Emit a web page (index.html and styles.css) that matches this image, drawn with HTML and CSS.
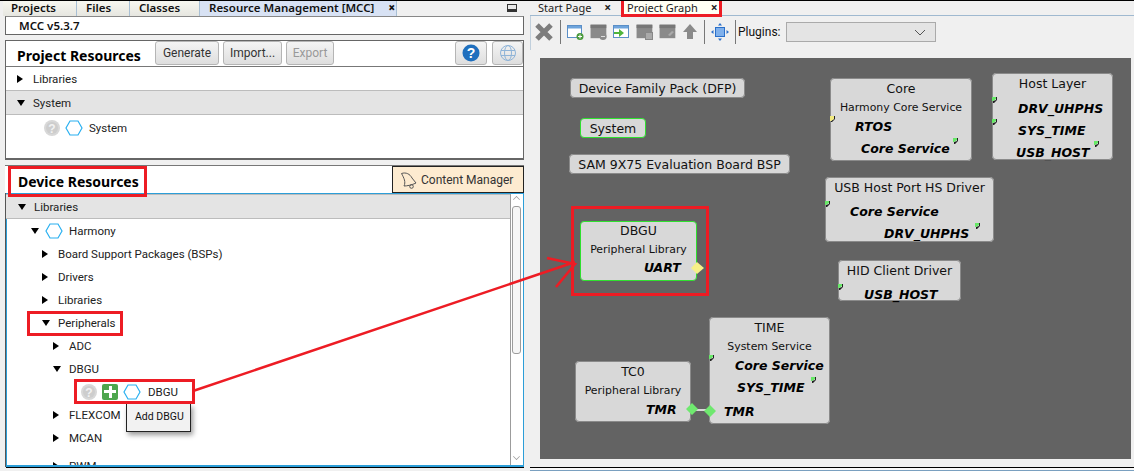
FILE: index.html
```html
<!DOCTYPE html>
<html lang="en">
<head>
    <meta charset="UTF-8">
    <title>MCC Project Graph</title>
    <link rel="stylesheet" href="styles.css">
</head>
<body>
    <svg width="0" height="0" class="defs">
        <symbol id="hex" viewBox="0 0 18 16"><path d="M5 1h8l4 7-4 7H5L1 8z" fill="#fff" stroke="#2ab0f0" stroke-width="1.2"/></symbol>
        <symbol id="help" viewBox="0 0 16 16"><circle cx="8" cy="8" r="8" fill="#d8d8d8"/><circle cx="8" cy="8" r="6" fill="#cdcdcd"/><text x="8" y="12.500" text-anchor="middle" font-size="12" font-weight="700" fill="#f2f2f2" font-family="Liberation Sans">?</text></symbol>
        <symbol id="win" viewBox="0 0 16 16"><rect x="0.5" y="1.5" width="14" height="12" fill="#8a8a8a"/><rect x="0.5" y="1.5" width="14" height="3" fill="#777"/></symbol>
    </svg>

    <div class="app">
        <!-- left side -->
        <div class="left">
            <div class="tabs">
                <span class="tab tab-projects">Projects</span>
                <span class="tab tab-files">Files</span>
                <span class="tab tab-classes">Classes</span>
                <span class="tab tab-active">Resource Management [MCC] <b class="close">×</b></span>
                <span class="minimize"></span>
            </div>

            <div class="version">MCC v5.3.7</div>

            <div class="project">
                <div class="project-head">
                    <h2>Project Resources</h2>
                    <button class="btn btn-gen">Generate</button>
                    <button class="btn btn-imp">Import...</button>
                    <button class="btn btn-exp" disabled>Export</button>
                    <span class="spacer"></span>
                    <button class="btn btn-icon btn-help">
                        <svg width="18" height="18" viewBox="0 0 18 18"><circle cx="9" cy="9" r="8.5" fill="#1f6fbe"/><text x="9" y="14" text-anchor="middle" font-size="14" font-weight="700" fill="#fff" font-family="Liberation Sans">?</text></svg>
                    </button>
                    <button class="btn btn-icon">
                        <svg width="18" height="18" viewBox="0 0 18 18" fill="none" stroke="#8fb4d8"><circle cx="9" cy="9" r="7.5"/><ellipse cx="9" cy="9" rx="3.5" ry="7.5"/><path d="M2 6.5h14M2 11.5h14"/></svg>
                    </button>
                </div>
                <div class="project-tree">
                    <div class="row"><i class="arrow-r"></i>Libraries</div>
                    <div class="row row-sel"><i class="arrow-d"></i>System</div>
                    <div class="row row-leaf">
                        <svg class="ico" width="16" height="16"><use href="#help"/></svg>
                        <svg class="ico" width="18" height="16"><use href="#hex"/></svg>
                        <span class="leaf-name">System</span>
                    </div>
                </div>
            </div>

            <div class="device">
                <div class="device-head">
                    <h2>Device Resources</h2>
                    <div class="content-mgr">
                        <svg width="18" height="18" viewBox="0 0 18 18" fill="none" stroke="#555"><path d="M1.500 2.500C6 1 10 3 12 7l4 5c-4 2-9 3-12 3 2-4 0-8-2.500-12.500z"/><circle cx="11.500" cy="15.500" r="1.800"/></svg>
                        Content Manager
                    </div>
                </div>
                <div class="device-body">
                    <div class="device-tree">
                        <div class="row row-sel row-dev"><i class="arrow-d"></i>Libraries</div>
                        <div class="row lv1"><i class="arrow-d"></i><svg class="ico hex-gap" width="18" height="16"><use href="#hex"/></svg>Harmony</div>
                        <div class="row lv2"><i class="arrow-r"></i>Board Support Packages (BSPs)</div>
                        <div class="row lv2"><i class="arrow-r"></i>Drivers</div>
                        <div class="row lv2"><i class="arrow-r"></i>Libraries</div>
                        <div class="row lv2"><i class="arrow-d"></i>Peripherals</div>
                        <div class="row lv3"><i class="arrow-r"></i>ADC</div>
                        <div class="row lv3"><i class="arrow-d"></i>DBGU</div>
                        <div class="row lv4">
                            <svg class="ico" width="16" height="16"><use href="#help"/></svg>
                            <span class="plus"></span>
                            <svg class="ico" width="18" height="16"><use href="#hex"/></svg>
                            <span>DBGU</span>
                        </div>
                        <div class="row lv3"><i class="arrow-r"></i>FLEXCOM</div>
                        <div class="row lv3"><i class="arrow-r"></i>MCAN</div>
                        <div class="row lv3 row-cut"><i class="arrow-r"></i>PWM</div>
                        <div class="tooltip">Add DBGU</div>
                    </div>
                    <div class="scrollbar">
                        <span class="sb-up"></span>
                        <span class="sb-thumb"></span>
                        <span class="sb-down"></span>
                    </div>
                </div>
            </div>
        </div>

        <!-- right side -->
        <div class="right">
            <div class="tabs tabs-right">
                <span class="rtab rtab-start">Start Page <b class="close">×</b></span>
                <span class="rtab rtab-graph">Project Graph <b class="close">×</b></span>
            </div>

            <div class="toolbar">
                <svg width="20" height="20" viewBox="0 0 20 20"><path d="M3 3l14 14M17 3L3 17" stroke="#7d7d7d" stroke-width="5"/></svg>
                <span class="sep"></span>
                <svg width="18" height="18" viewBox="0 0 18 18"><rect x="0.5" y="2.5" width="14" height="12" fill="#fff" stroke="#5b8fc7"/><rect x="1" y="3" width="13" height="2.5" fill="#6ea4dc"/><circle cx="13" cy="13.5" r="3.5" fill="#4a9a3c"/><path d="M11 13.5h4M13 11.5v4" stroke="#fff"/></svg>
                <svg width="18" height="18" viewBox="0 0 18 18"><use href="#win"/><circle cx="13" cy="13.5" r="3.5" fill="#8a8a8a"/><path d="M11 13.5h4" stroke="#ddd"/></svg>
                <svg width="18" height="18" viewBox="0 0 18 18"><rect x="0.5" y="2.5" width="15" height="12" fill="#fff" stroke="#5b8fc7"/><rect x="1" y="3" width="14" height="2.5" fill="#6ea4dc"/><path d="M1 9h5V6l5 4-5 4v-3H1z" fill="#4fb43c"/></svg>
                <svg width="18" height="18" viewBox="0 0 18 18"><use href="#win"/><rect x="9.5" y="9.5" width="7" height="7" fill="#aaa" stroke="#888"/></svg>
                <svg width="18" height="18" viewBox="0 0 18 18"><use href="#win"/><path d="M9 12l4-4 2 1-4 4z" fill="#aaa"/></svg>
                <svg width="16" height="18" viewBox="0 0 16 18"><path d="M8 1l7 8h-4v7H5V9H1z" fill="#8a8a8a"/></svg>
                <span class="sep"></span>
                <svg width="18" height="18" viewBox="0 0 18 18" fill="#2a6fc9"><rect x="4.5" y="4.5" width="9" height="9" fill="#7fb0ec" stroke="#2a6fc9"/><path d="M9 0l2 2.500H7zM9 18l2-2.500H7zM0 9l2.500-2v4zM18 9l-2.500-2v4z"/></svg>
                <span class="sep sep-last"></span>
                <span class="plugins">Plugins:</span>
                <div class="select"><svg width="12" height="7" viewBox="0 0 12 7" fill="none" stroke="#555"><path d="M1 1l5 5 5-5"/></svg></div>
            </div>

            <div class="canvas">
                <div class="node node-dfp">Device Family Pack (DFP)</div>
                <div class="node node-sys on">System</div>
                <div class="node node-sam">SAM 9X75 Evaluation Board BSP</div>

                <div class="node node-dbgu on">
                    <div class="n-title">DBGU</div>
                    <div class="n-sub">Peripheral Library</div>
                    <div class="n-port p-dbgu">UART</div>
                </div>

                <div class="node node-core">
                    <div class="n-title">Core</div>
                    <div class="n-sub">Harmony Core Service</div>
                    <div class="n-port p-core1">RTOS</div>
                    <div class="n-port p-core2">Core Service</div>
                </div>

                <div class="node node-host">
                    <div class="n-title">Host Layer</div>
                    <div class="n-port p-host1">DRV_UHPHS</div>
                    <div class="n-port p-host2">SYS_TIME</div>
                    <div class="n-port p-host3">USB_HOST</div>
                </div>

                <div class="node node-usb">
                    <div class="n-title">USB Host Port HS Driver</div>
                    <div class="n-port p-usb1">Core Service</div>
                    <div class="n-port p-usb2">DRV_UHPHS</div>
                </div>

                <div class="node node-hid">
                    <div class="n-title">HID Client Driver</div>
                    <div class="n-port p-hid">USB_HOST</div>
                </div>

                <div class="node node-tc0">
                    <div class="n-title">TC0</div>
                    <div class="n-sub">Peripheral Library</div>
                    <div class="n-port p-tc0">TMR</div>
                </div>

                <div class="node node-time">
                    <div class="n-title">TIME</div>
                    <div class="n-sub">System Service</div>
                    <div class="n-port p-time1">Core Service</div>
                    <div class="n-port p-time2">SYS_TIME</div>
                    <div class="n-port p-time3">TMR</div>
                </div>

                <!-- ports and the connection, in canvas coordinates -->
                <svg class="wires" width="591" height="401" viewBox="540 58 591 401">
                    <path d="M692 410h18" stroke="#fff" stroke-width="1.500"/>
                    <path d="M692 403l6 6-6 6-6-6zM710 405l6 6-6 6-6-6z" fill="#6fe86f"/>
                    <path d="M697 262l7 6-7 6-6-6z" fill="#f8f088"/>
                    <g fill="#222"><path d="M835 116v3l-3 3h-1v-1l3-2v-3z"/></g>
                    <g fill="#f2ea80"><path d="M830 116h4v3l-3 2h-1z"/></g>
                    <g fill="#222">
                        <path d="M958 138v3l-3 3h-1v-2l3-1v-3zM997 97v3l-3 3h-1v-2l3-1v-3zM997 119v3l-3 3h-1v-2l3-1v-3zM1099 141v3l-3 3h-1v-2l3-1v-3z"/>
                        <path d="M830 201v3l-3 3h-1v-2l3-1v-3zM980 223v3l-3 3h-1v-2l3-1v-3zM843 284v3l-3 3h-1v-2l3-1v-3zM714 355v3l-3 3h-1v-2l3-1v-3zM816 377v3l-3 3h-1v-2l3-1v-3z"/>
                    </g>
                    <g fill="#66e866">
                        <path d="M953 138h4v2l-3 2h-1zM992 97h4v2l-3 2h-1zM992 119h4v2l-3 2h-1zM1094 141h4v2l-3 2h-1z"/>
                        <path d="M825 201h4v2l-3 2h-1zM975 223h4v2l-3 2h-1zM838 284h4v2l-3 2h-1zM709 355h4v2l-3 2h-1zM811 377h4v2l-3 2h-1z"/>
                    </g>
                </svg>
            </div>
            <div class="bottom"></div>
        </div>

        <!-- annotations drawn over the screenshot -->
        <span class="mark mark-device"></span>
        <span class="mark mark-periph"></span>
        <span class="mark mark-leaf"></span>
        <span class="mark mark-graph"></span>
        <span class="mark mark-dbgu"></span>
        <svg class="arrow" width="1134" height="471" viewBox="0 0 1134 471" fill="none" stroke="#ed1c24" stroke-width="2.500">
            <path d="M193 391L575 262M547 258l28 6-19 23"/>
        </svg>
    </div>
</body>
</html>
```
FILE: styles.css
```css
/* page */
* {
    box-sizing: border-box;
}

body {
    margin: 0;
    background: #f0f0f0;
    font-family: Roboto, "Noto Sans", sans-serif;
    font-size: 11.500px;
    color: #111;
}

.defs {
    position: absolute;
}

.app {
    position: relative;
    display: flex;
    width: 1134px;
    height: 471px;
    overflow: hidden;
    border-top: 1px solid #000;
}

h2 {
    margin: 0;
    font-family: "Noto Sans", sans-serif;
    font-size: 14px;
    font-weight: 700;
    color: #000;
}

/* left side */
.left {
    width: 530px;
    height: 470px;
    flex: none;
    display: flex;
    flex-direction: column;
    background: #f0f0f0;
}

.tabs {
    display: flex;
    height: 15px;
    flex: none;
    padding-left: 3px;
}

.tab {
    padding-left: 9px;
    line-height: 14px;
    font-family: "Noto Sans", sans-serif;
    font-weight: 600;
    font-size: 11.5px;
    background: linear-gradient(#f7f7f0, #e6e6e0);
    border-right: 1px solid #a8bfd4;
}

.tab-projects {
    width: 74px;
    padding-left: 8px;
}

.tab-files {
    width: 53px;
}

.tab-classes {
    width: 70px;
}

.tab-active {
    width: 197px;
    background: #d8e2f4;
    line-height: 13px;
}

.close {
    margin-left: 11px;
    font-size: 12px;
    line-height: 12px;
}

.minimize {
    width: 10px;
    height: 8px;
    margin: 3px 0 0 110px;
    border: 1px solid #333;
    border-bottom-width: 3px;
    background: #e8e8e8;
}

.version {
    height: 19px;
    flex: none;
    margin-left: 5px;
    width: 519px;
    padding-left: 13px;
    line-height: 17px;
    font-family: "Noto Sans", sans-serif;
    font-weight: 600;
    font-size: 11.5px;
    background: #fff;
    border: 1px solid #666;
    border-top-color: #888;
}

.project {
    margin: 5px 0 0 5px;
    width: 519px;
    height: 120px;
    flex: none;
    background: #fff;
    border: 1px solid #666;
    border-bottom-width: 2px;
}

.project-head {
    display: flex;
    align-items: flex-start;
    height: 26px;
    padding: 0 0 0 11px;
    border-bottom: 1px solid #777;
}

.project-head h2 {
    width: 138px;
    margin-top: 5px;
    line-height: 20px;
}

.btn {
    height: 24px;
    margin: 0 4px 0 0;
    padding: 0;
    font-family: inherit;
    font-size: 12px;
    color: #333;
    background: linear-gradient(#f4f4f4, #dedede);
    border: 1px solid #b5b5b5;
    border-radius: 3px;
}

.btn-gen {
    width: 64px;
}

.btn-imp {
    width: 59px;
}

.btn-exp {
    width: 48px;
    color: #999;
}

.spacer {
    flex: 1;
}

.btn-icon {
    width: 31px;
    margin-right: 0;
    display: flex;
    align-items: center;
    justify-content: center;
}

.btn-help {
    width: 32px;
    margin-right: 5px;
}

/* tree rows */
.row {
    display: flex;
    align-items: center;
    height: 23px;
    padding-left: 11px;
    white-space: nowrap;
    color: #222;
}

.row-sel {
    background: #e4e4e4;
    border-top: 1px solid #bcbcbc;
    border-bottom: 1px solid #bcbcbc;
    height: 25px;
}

.row-leaf {
    padding-left: 38px;
    height: 25px;
}

.arrow-r {
    width: 0;
    height: 0;
    flex: none;
    margin-right: 10px;
    border-left: 6px solid #000;
    border-top: 4px solid transparent;
    border-bottom: 4px solid transparent;
}

.arrow-d {
    width: 0;
    height: 0;
    flex: none;
    margin-right: 8px;
    border-top: 6px solid #000;
    border-left: 4px solid transparent;
    border-right: 4px solid transparent;
}

.ico {
    flex: none;
    margin-right: 5px;
}

.hex-gap {
    margin: 0 6px 0 -2px;
}

.leaf-name {
    margin-left: 1px;
}

/* device resources */
.device {
    margin: 5px 0 0 5px;
    width: 519px;
    flex: 1;
    min-height: 0;
    display: flex;
    flex-direction: column;
    background: #f0f0f0;
}

.device-head {
    display: flex;
    justify-content: space-between;
    height: 28px;
    flex: none;
    padding-left: 13px;
    background: #fff;
    border-top: 1px solid #777;
}

.device-head h2 {
    margin-top: 6px;
    line-height: 20px;
}

.content-mgr {
    display: flex;
    align-items: center;
    gap: 3px;
    width: 132px;
    padding-left: 7px;
    font-size: 12px;
    color: #333;
    background: #fdebd0;
    border: 1px solid #222;
}

.device-body {
    flex: 1;
    display: flex;
    min-height: 0;
    margin: 0 0 4px 1px;
    background: #fff;
    border: 1px solid #2c9ed8;
    border-bottom-width: 2px;
    box-shadow: -1px 0 0 #555, 0 1px 0 #000;
}

.device-tree {
    position: relative;
    flex: 1;
    min-width: 0;
    margin-left: -1px;
    overflow: hidden;
}

.row-dev {
    padding-left: 12px;
}

.lv1 {
    padding-left: 25px;
}

.lv2 {
    padding-left: 36px;
    height: 23px;
}

.lv3 {
    padding-left: 47px;
}

.lv4 {
    padding-left: 75px;
}

.lv4 .plus + .ico {
    margin-right: 7px;
}

.row-cut {
    margin-top: 5px;
}

.plus {
    width: 16px;
    height: 16px;
    flex: none;
    margin-right: 5px;
    background: linear-gradient(#fff, #fff) center / 12px 3px no-repeat,
        linear-gradient(#fff, #fff) center / 3px 12px no-repeat,
        #4ea64e;
    border-radius: 2px;
}

.tooltip {
    position: absolute;
    left: 120px;
    top: 210px;
    width: 65px;
    height: 28px;
    padding-left: 8px;
    line-height: 25px;
    font-size: 10.500px;
    background: #f2f2f2;
    border: 1px solid #222;
    border-top: none;
    box-shadow: 2px 3px 5px rgba(0, 0, 0, 0.4);
}

.scrollbar {
    display: flex;
    flex-direction: column;
    align-items: flex-start;
    width: 13px;
    flex: none;
    padding: 2px 0 0 1px;
    background: #fff;
    border-left: 1px solid #9c9c9c;
}

.sb-up,
.sb-down {
    width: 7px;
    height: 7px;
    margin-left: 1px;
    border-left: 1px solid #999;
    border-top: 1px solid #999;
    transform: rotate(45deg) scale(0.7);
}

.sb-down {
    margin-top: auto;
    margin-bottom: 5px;
    transform: rotate(225deg) scale(0.7);
}

.sb-thumb {
    width: 9px;
    height: 148px;
    margin-top: 3px;
    background: #f6f6f6;
    border: 1px solid #9c9c9c;
    border-radius: 3px;
}

/* right side */
.right {
    position: relative;
    flex: 1;
    height: 470px;
    display: flex;
    flex-direction: column;
    min-width: 0;
}

.tabs-right {
    padding-left: 1px;
    border-bottom: 1px solid #9fb9d0;
}

.rtab {
    display: block;
    line-height: 13px;
    font-family: "Noto Sans", sans-serif;
    font-size: 11px;
    color: #222;
}

.rtab-start {
    width: 92px;
    padding-left: 7px;
}

.rtab-graph {
    width: 98px;
    padding-left: 4px;
    background: #fffff4;
}

.rtab .close {
    margin-left: 10px;
}

.toolbar {
    display: flex;
    align-items: center;
    gap: 5px;
    height: 34px;
    flex: none;
    padding: 0 0 2px 3px;
    border-left: 1px solid #c0cfdc;
}

.sep {
    width: 1px;
    height: 24px;
    margin: 0 1px;
    background: #777;
}

.sep-last {
    margin-right: -3px;
}

.plugins {
    margin-right: 0;
    font-size: 12px;
}

.select {
    display: flex;
    align-items: center;
    justify-content: flex-end;
    width: 150px;
    height: 20px;
    padding-right: 9px;
    background: #e4e4e4;
    border: 1px solid #aaa;
}

.canvas {
    position: relative;
    width: 591px;
    height: 401px;
    margin: 8px 0 0 10px;
    flex: none;
    background: #636363;
    font-family: "DejaVu Sans", sans-serif;
}

.bottom {
    height: 11px;
    margin-top: auto;
    border-bottom: 1px solid #7aa0c0;
    box-shadow: inset 0 -2px 0 #f8f8f8, inset 0 -3px 0 #000;
}

/* graph nodes */
.node {
    position: absolute;
    padding-top: 1px;
    background: #d8d8d8;
    border: 1.5px solid #c8c8c8;
    border-radius: 4px;
    color: #111;
    font-size: 12.500px;
    line-height: 17px;
    text-align: center;
    white-space: nowrap;
    outline: 1px solid #8a8a8a;
    outline-offset: -1px;
}

.node.on {
    border-color: #2fe02f;
    outline: none;
}

.node-dfp {
    left: 30px;
    top: 20px;
    width: 175px;
    height: 20px;
}

.node-sys {
    left: 40px;
    top: 60px;
    width: 66px;
    height: 20px;
}

.node-sam {
    left: 29px;
    top: 96px;
    width: 221px;
    height: 20px;
}

.node-dbgu {
    left: 40px;
    top: 163px;
    width: 117px;
    height: 60px;
}

.node-core {
    left: 290px;
    top: 20px;
    width: 142px;
    height: 83px;
}

.node-host {
    left: 452px;
    top: 15px;
    width: 121px;
    height: 87px;
}

.node-usb {
    left: 285px;
    top: 119px;
    width: 169px;
    height: 65px;
}

.node-hid {
    left: 298px;
    top: 202px;
    width: 123px;
    height: 41px;
}

.node-tc0 {
    left: 35px;
    top: 303px;
    width: 116px;
    height: 61px;
}

.node-time {
    left: 169px;
    top: 259px;
    width: 121px;
    height: 107px;
}

.n-title {
    line-height: 17px;
}

.n-sub {
    margin-top: 3px;
    font-size: 10.900px;
    line-height: 16px;
}

.n-port {
    margin-top: 5px;
    font-weight: 700;
    font-style: italic;
    font-size: 12.500px;
    line-height: 17px;
    text-align: left;
    color: #000;
}

.node-dbgu .n-title {
    margin-top: -1px;
}

.p-dbgu {
    padding-left: 63px;
    margin-top: 1px;
}

.p-core1 {
    padding-left: 24px;
    margin-top: 2px;
}

.p-core2 {
    padding-left: 30px;
}

.p-host1 {
    padding-left: 25px;
    margin-top: 8px;
}

.p-host2 {
    padding-left: 25px;
}

.p-host3 {
    padding-left: 23px;
}

.p-usb1 {
    padding-left: 24px;
    margin-top: 7px;
}

.p-usb2 {
    padding-left: 58px;
}

.p-hid {
    padding-left: 25px;
    margin-top: 7px;
}

.p-tc0 {
    padding-left: 70px;
    margin-top: 2px;
}

.p-time1 {
    padding-left: 25px;
    margin-top: 2px;
}

.p-time2 {
    padding-left: 27px;
}

.p-time3 {
    padding-left: 14px;
    margin-top: 7px;
}

.wires {
    position: absolute;
    left: 0;
    top: 0;
}

/* red annotations */
.mark {
    position: absolute;
    border: 3px solid #ed1c24;
}

.mark-device {
    left: 8px;
    top: 165px;
    width: 139px;
    height: 31px;
}

.mark-periph {
    left: 27px;
    top: 310px;
    width: 96px;
    height: 25px;
}

.mark-leaf {
    left: 74px;
    top: 378px;
    width: 121px;
    height: 25px;
}

.mark-graph {
    left: 621px;
    top: -3px;
    width: 101px;
    height: 19px;
}

.mark-dbgu {
    left: 571px;
    top: 205px;
    width: 138px;
    height: 90px;
}

.arrow {
    position: absolute;
    left: 0;
    top: -1px;
}
```
